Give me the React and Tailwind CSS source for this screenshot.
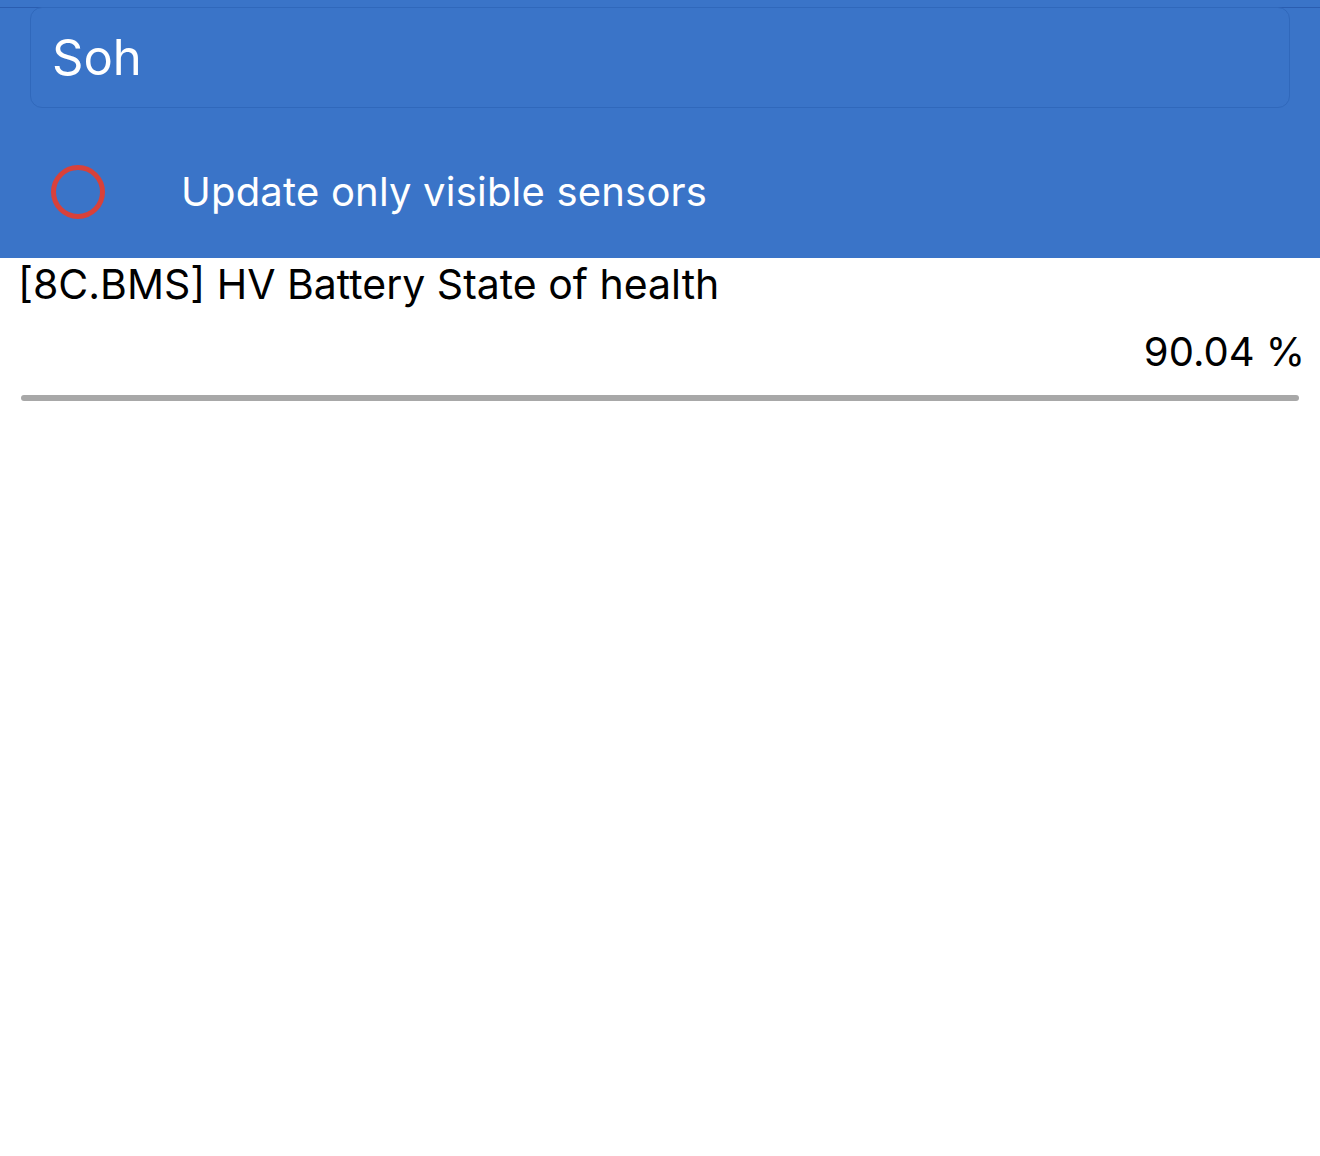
import React, { useState } from "react";

export default function App() {
    const [query, setQuery] = useState("Soh");
    const [onlyVisible, setOnlyVisible] = useState(false);

    const sensors = [
        { id: "8C.BMS.SOH", title: "[8C.BMS] HV Battery State of health", value: "90.04 %" },
    ];

    return (
        <div className="min-h-[1156px] bg-white font-['Inter','Liberation_Sans',sans-serif]">
            <div className="bg-[#3a74c8] pt-[6px] border-t border-t-[#3a74c8]">
                <div className="h-px bg-[#2a5db0]" />
                <div className="px-[30px]">
                    <input
                        value={query}
                        onChange={(e) => setQuery(e.target.value)}
                        className="w-full h-[101px] -mt-px rounded-[12px] border border-[#3068bb] bg-transparent px-[21px] text-[49px] text-white outline-none"
                    />
                </div>
                <label className="flex items-center h-[150px] pt-[18px] pl-[51px] cursor-pointer">
                    <button
                        onClick={() => setOnlyVisible(!onlyVisible)}
                        className="w-[54px] h-[54px] rounded-full border-[5px] border-[#d8413a] flex items-center justify-center"
                    >
                        {onlyVisible && <span className="w-[30px] h-[30px] rounded-full bg-[#d8413a]" />}
                    </button>
                    <span className="ml-[76px] text-[40px] text-white tracking-[0.2px]">Update only visible sensors</span>
                </label>
            </div>

            <ul>
                {sensors.map((s) => (
                    <li key={s.id} className="pl-[18px] pr-[15px]">
                        <p className="text-[41px] leading-[52px] text-black">{s.title}</p>
                        <p className="text-[40px] leading-[52px] mt-[16px] text-right text-black">{s.value}</p>
                        <div className="mt-[17px] ml-[3px] mr-[6px] h-[6px] rounded-full bg-[#a8a8a8]" />
                    </li>
                ))}
            </ul>
        </div>
    );
}
